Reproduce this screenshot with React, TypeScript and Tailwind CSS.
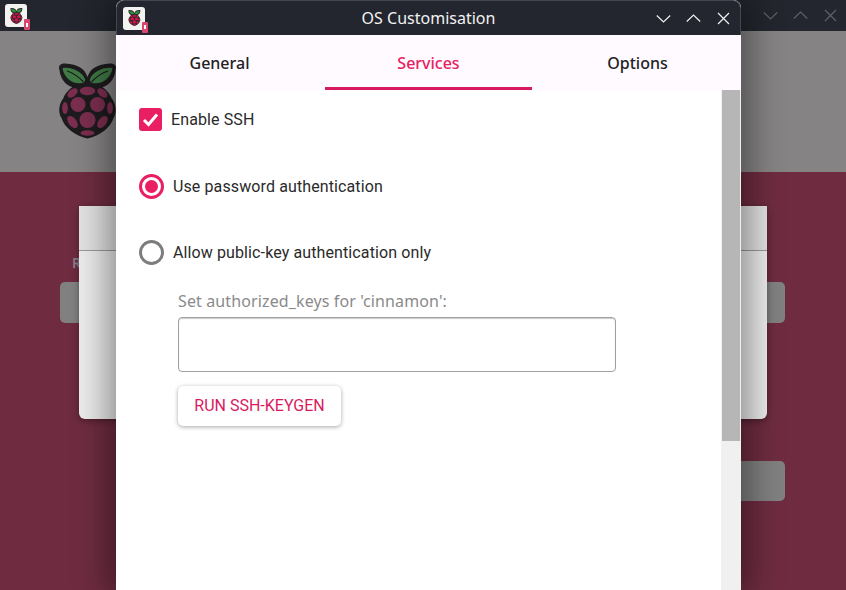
function Rasp({ dim = false }: { dim?: boolean }) {
  const berry = dim ? "#7b2e4f" : "#d6124f";
  const leaf = dim ? "#3f7a45" : "#2f9e3f";
  const line = dim ? "#1d1b1d" : "#2a2a2a";
  return (
    <svg viewBox="0 0 60 76" className="w-full h-full block">
      <path d="M29.5 14 C27 6 20 1 7 0.5 C2 0.5 0 3 1.5 7 C2 16 9 25 20 25 C24 25 27.5 23 29.5 20 C31.5 23 35 25 39 25 C50 25 57 16 57.5 7 C59 3 57 0.5 52 0.5 C39 1 32 6 29.5 14Z" fill={line} />
      <path d="M29.5 17 C21 18 8 27 5.5 35 C0.5 41 0 50 3.5 55 C6 64 17 73 29.5 75.5 C42 73 53 64 55.5 55 C59 50 58.5 41 53.5 35 C51 27 38 18 29.5 17Z" fill={line} />
      <path d="M4.5 5 C14 4 23 8 27 16 C27.5 18 26 20 24 20 C15 22 6 15 4.5 5Z" fill={leaf} />
      <path d="M54.5 5 C45 4 36 8 32 16 C31.5 18 33 20 35 20 C44 22 53 15 54.5 5Z" fill={leaf} />
      <path d="M9 8 C15 10 20 13 25.5 19 M50 8 C44 10 39 13 33.5 19" stroke={line} strokeWidth="1.2" fill="none" />
      <ellipse cx="29.5" cy="28" rx="7.8" ry="4.2" fill={berry} />
      <ellipse cx="14.5" cy="30" rx="6" ry="3.6" transform="rotate(-40 14.5 30)" fill={berry} />
      <ellipse cx="44.5" cy="30" rx="6" ry="3.6" transform="rotate(40 44.5 30)" fill={berry} />
      <circle cx="20" cy="41.5" r="7.5" fill={berry} />
      <circle cx="39.5" cy="41.5" r="7.5" fill={berry} />
      <ellipse cx="7" cy="45" rx="2.9" ry="6" fill={berry} />
      <ellipse cx="52" cy="45" rx="2.9" ry="6" fill={berry} />
      <circle cx="29.5" cy="57" r="8" fill={berry} />
      <ellipse cx="14.5" cy="59" rx="4" ry="7" transform="rotate(-38 14.5 59)" fill={berry} />
      <ellipse cx="44.5" cy="59" rx="4" ry="7" transform="rotate(38 44.5 59)" fill={berry} />
      <ellipse cx="29.5" cy="70" rx="7" ry="2.8" fill={berry} />
    </svg>
  );
}

function AppIcon() {
  return (
    <div className="relative w-[22px] h-[23px] rounded-[3px] bg-[#f2f2f0] flex items-center justify-center">
      <div className="w-[13px] h-[16px]">
        <Rasp />
      </div>
      <div className="absolute right-[-3px] bottom-[-3px] w-[6px] h-[11px] rounded-[1px] bg-[#d9466f] flex items-center justify-center">
        <div className="w-[2px] h-[4px] bg-white" />
      </div>
    </div>
  );
}

function WinButtons({ color }: { color: string }) {
  return (
    <div className="flex items-center gap-[15px]">
      <svg width="15" height="15" viewBox="0 0 15 15" fill="none" stroke={color} strokeWidth="1.2"><path d="M0.8 4.5 L7.5 11 L14.2 4.5" /></svg>
      <svg width="15" height="15" viewBox="0 0 15 15" fill="none" stroke={color} strokeWidth="1.2"><path d="M0.8 10.5 L7.5 4 L14.2 10.5" /></svg>
      <svg width="15" height="15" viewBox="0 0 15 15" fill="none" stroke={color} strokeWidth="1.2"><path d="M2 2 L13 13 M13 2 L2 13" /></svg>
    </div>
  );
}

function Backdrop() {
  return (
    <div className="h-[590px] flex flex-col bg-[#6f2c40]">
      <div className="h-[31px] shrink-0 bg-[#23262e] flex items-center justify-between pl-[5px] pr-[8px]">
        <AppIcon />
        <WinButtons color="#5d6167" />
      </div>
      <div className="h-[141px] shrink-0 bg-[#858384] pl-[58px] pt-[32px]">
        <div className="w-[60px] h-[76px]">
          <Rasp dim />
        </div>
      </div>
      <div className="flex-1 relative">
        <div className="absolute left-[60px] w-[725px] top-[110px] h-[41px] rounded-[5px] bg-[#808080]" />
        <div className="absolute left-[400px] w-[385px] top-[289px] h-[40px] rounded-[5px] bg-[#808080]" />
        <div className="absolute left-[72px] top-[80px] text-[14px] font-['Noto_Sans'] font-semibold text-[#8a7f8c]">R</div>
        <div className="absolute left-[79px] w-[688px] top-[34px] h-[213px] rounded-b-[6px] bg-[#ececec] shadow-[0_2px_6px_rgba(0,0,0,0.35)]">
          <div className="h-[44px] border-b border-[#9a9a9a] bg-[#e2e2e2] box-content" />
        </div>
      </div>
    </div>
  );
}

export default function App() {
  return (
    <div className="relative w-[846px] h-[590px] overflow-hidden font-['Roboto',sans-serif]">
      <Backdrop />
      <div className="absolute left-[116px] top-0 w-[625px] h-[590px] flex flex-col rounded-t-[8px] overflow-hidden bg-white shadow-[0_0_34px_8px_rgba(0,0,0,0.42)]">
        <div className="relative h-[35px] shrink-0 bg-[#23262e] flex items-center justify-between pl-[6px] pr-[9px] border-t border-l border-r border-[#44474d] rounded-t-[8px]">
          <AppIcon />
          <div className="absolute inset-0 flex items-center justify-center font-['Noto_Sans',sans-serif] text-[16px] text-[#f2f2f2]">OS Customisation</div>
          <div className="relative"><WinButtons color="#f0f0f0" /></div>
        </div>
        <div className="h-[55px] shrink-0 bg-[#fffaff] flex font-['Noto_Sans',sans-serif] text-[16px] font-medium">
          <div className="w-[207px] flex items-center justify-center text-[#222]">General</div>
          <div className="ml-[2px] w-[207px] flex items-center justify-center text-[#e8205f] border-b-[3px] border-[#d81b60] pt-[3px]">Services</div>
          <div className="flex-1 pl-[2px] flex items-center justify-center text-[#222]">Options</div>
        </div>
        <div className="flex-1 flex min-h-0">
          <div className="flex-1 pl-[23px] pt-[18px] text-[16px] tracking-[0.11px] text-[#2a2a2a]">
            <div className="flex items-center h-[23px] gap-[9px]">
              <div className="w-[23px] h-[23px] rounded-[3px] bg-[#e91e63] flex items-center justify-center">
                <svg width="17" height="17" viewBox="0 0 17 17" fill="none" stroke="white" strokeWidth="3"><path d="M2 9 L6.5 13.5 L15 3.5" /></svg>
              </div>
              <span className="pt-[1px]">Enable SSH</span>
            </div>
            <div className="flex items-center h-[25px] gap-[9px] mt-[43px]">
              <div className="w-[25px] h-[25px] rounded-full border-[3px] border-[#e91e63] flex items-center justify-center">
                <div className="w-[13px] h-[13px] rounded-full bg-[#e91e63]" />
              </div>
              <span>Use password authentication</span>
            </div>
            <div className="flex items-center h-[25px] gap-[9px] mt-[41px]">
              <div className="w-[25px] h-[25px] rounded-full border-[3px] border-[#7d7d7d]" />
              <span>Allow public-key authentication only</span>
            </div>
            <div className="pl-[39px]">
              <div className="mt-[24px] h-[24px] leading-[24px] font-['Noto_Sans',sans-serif] text-[16px] tracking-[0.12px] text-[#8a8a8a]">Set authorized_keys for 'cinnamon':</div>
              <div className="mt-[4px] w-[438px] h-[55px] rounded-[4px] border border-[#a0a0a0] bg-white shadow-[inset_0_1px_1px_rgba(0,0,0,0.2)]" />
              <div className="mt-[14px] w-[163px] h-[40px] rounded-[5px] bg-white flex items-center justify-center text-[16px] tracking-normal text-[#d81b60] shadow-[0_1px_4px_rgba(0,0,0,0.35)]">RUN SSH-KEYGEN</div>
            </div>
          </div>
          <div className="w-[20px] shrink-0 bg-[#f0f0f0] pl-px pr-px">
            <div className="h-[351px] bg-[#b6b6b6]" />
          </div>
        </div>
      </div>
    </div>
  );
}
